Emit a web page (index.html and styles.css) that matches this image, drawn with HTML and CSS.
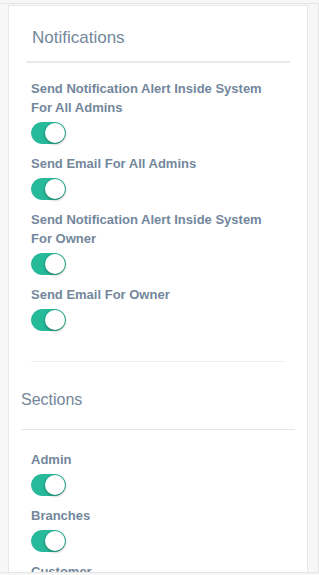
FILE: index.html
```html
<!DOCTYPE html>
<html>
<head>
<meta charset="utf-8">
<link rel="stylesheet" href="styles.css">
</head>
<body>
<div class="frame">
  <div class="panel">
    <div class="panel-title">Notifications</div>
    <div class="form">
      <div class="field">
        <label class="field-label">Send Notification Alert Inside System For All Admins</label>
        <span class="switch"><small class="knob"></small></span>
      </div>
      <div class="field">
        <label class="field-label">Send Email For All Admins</label>
        <span class="switch"><small class="knob"></small></span>
      </div>
      <div class="field">
        <label class="field-label">Send Notification Alert Inside System For Owner</label>
        <span class="switch"><small class="knob"></small></span>
      </div>
      <div class="field">
        <label class="field-label">Send Email For Owner</label>
        <span class="switch"><small class="knob"></small></span>
      </div>
      <div class="divider"></div>
    </div>
    <div class="sections">
      <div class="sections-title">Sections</div>
      <div class="sections-body">
        <div class="field">
          <label class="field-label">Admin</label>
          <span class="switch"><small class="knob"></small></span>
        </div>
        <div class="field">
          <label class="field-label">Branches</label>
          <span class="switch"><small class="knob"></small></span>
        </div>
        <div class="field">
          <label class="field-label">Customer</label>
          <span class="switch"><small class="knob"></small></span>
        </div>
      </div>
    </div>
  </div>
</div>
</body>
</html>
```

FILE: styles.css
```css
html, body {
  margin: 0;
  padding: 0;
  background: #f7f7f7;
  font-family: "Liberation Sans", Arial, sans-serif;
  color: #73879c;
}

.frame {
  box-sizing: border-box;
  margin-top: 3px;
  width: 319px;
  height: 570px;
  border-top: 1px solid #e4e4e4;
  border-right: 1px solid #e4e4e4;
  border-bottom: 1px solid #e4e4e4;
  padding: 1px 0 0 8px;
  overflow: hidden;
}

.panel {
  box-sizing: border-box;
  width: 300px;
  background: #fff;
  border: 1px solid #e6e9ed;
  padding: 10px 17px;
}

.panel-title {
  font-size: 17px;
  line-height: 25px;
  padding: 9px 0 11px 6px;
  border-bottom: 2px solid #e6e9ed;
}

.form {
  padding: 16px 5px 0;
  display: flex;
  flex-direction: column;
}

.field {
  display: flex;
  flex-direction: column;
  align-items: flex-start;
  margin-bottom: 10px;
}

.field-label {
  font-size: 13px;
  font-weight: bold;
  line-height: 19px;
  margin-bottom: 5px;
  padding-right: 20px;
}

.switch {
  position: relative;
  box-sizing: border-box;
  display: block;
  width: 35px;
  height: 22px;
  border-radius: 20px;
  background: #26b99a;
  border: 1px solid #26b99a;
}

.knob {
  position: absolute;
  top: 0;
  left: 13px;
  width: 20px;
  height: 20px;
  border-radius: 50%;
  background: #fff;
  box-shadow: 0 1px 3px rgba(0, 0, 0, 0.4);
}

.divider {
  margin-top: 20px;
  border-top: 1px solid #eeeeee;
}

.sections {
  margin: 26px -5px 0;
}

.sections-title {
  font-size: 16px;
  line-height: 23px;
  padding-bottom: 18px;
  border-bottom: 1px solid #e5e5e5;
}

.sections-body {
  padding: 20px 10px 0;
}
```
